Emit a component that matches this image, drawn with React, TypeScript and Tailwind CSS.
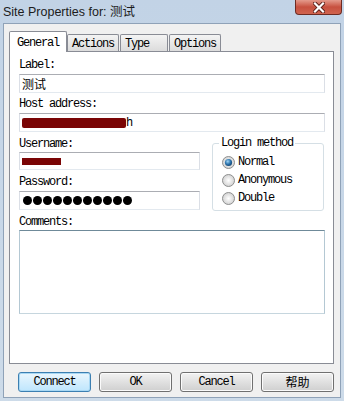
import React from "react";

const mono = "font-mono text-[12px] leading-[12px] tracking-[-1.2px] text-black";
const cjk = "font-['Noto_Sans_CJK_SC'] tracking-normal";

function Radio({ checked }: { checked?: boolean }) {
  return (
    <svg width="13" height="13" viewBox="0 0 13 13">
      <defs>
        <radialGradient id="rg" cx="50%" cy="50%" r="60%">
          <stop offset="0%" stopColor="#ffffff" />
          <stop offset="100%" stopColor="#c9c9c9" />
        </radialGradient>
        <radialGradient id="rb" cx="40%" cy="35%" r="70%">
          <stop offset="0%" stopColor="#9fd4f5" />
          <stop offset="55%" stopColor="#2c74ad" />
          <stop offset="100%" stopColor="#103f6b" />
        </radialGradient>
      </defs>
      <circle cx="6.5" cy="6.5" r="6" fill="url(#rg)" stroke="#8e8f8f" strokeWidth="1" />
      {checked && <circle cx="6.5" cy="6.5" r="3.6" fill="url(#rb)" />}
    </svg>
  );
}

function Tab({ label, active }: { label: string; active?: boolean }) {
  if (active) {
    return (
      <div className="relative z-10 -mb-px h-[21px] w-[58px] bg-white border border-b-0 border-[#898c95] rounded-t-[2px] flex items-start pt-[5px] pl-[7px]">
        <span className={mono}>{label}</span>
      </div>
    );
  }
  return (
    <div className="h-[17px] bg-gradient-to-b from-[#f4f4f4] to-[#dcdcdc] border border-b-0 border-[#898c95] rounded-t-[2px] flex items-start pt-[3px] pl-[4px]">
      <span className={mono}>{label}</span>
    </div>
  );
}

function Button({ label, primary }: { label: React.ReactNode; primary?: boolean }) {
  return (
    <div
      className={
        "w-[73px] h-[20px] rounded-[3px] border flex items-center justify-center " +
        (primary
          ? "border-[#3c7fb1] bg-gradient-to-b from-[#eaf6fd] to-[#bee6fd] shadow-[inset_0_0_0_1px_#a8d8f4]"
          : "border-[#707070] bg-gradient-to-b from-[#f2f2f2] to-[#cfcfcf] shadow-[inset_0_0_0_1px_#fbfbfb]")
      }
    >
      <span className={mono}>{label}</span>
    </div>
  );
}

export default function App() {
  return (
    <div className="w-[344px] h-[401px] bg-gradient-to-b from-[#c2d3e6] to-[#cddbe9] flex flex-col overflow-hidden">
      {/* title bar */}
      <div className="h-[23px] flex items-start justify-between">
        <span className="ml-[3px] mt-[4px] font-['Liberation_Sans'] text-[12.5px] leading-[14px] text-[#1c1c1c]">
          Site Properties for: <span className={cjk}>测试</span>
        </span>
        <div className="mr-[2px] w-[47px] h-[15px] rounded-b-[4px] border border-t-0 border-[#6e2b22] bg-gradient-to-b from-[#e49a8c] via-[#c7503f] to-[#d0644f] flex items-center justify-center">
          <svg width="12" height="11" viewBox="0 0 12 11">
            <path d="M2 1.5 L10 9.5 M10 1.5 L2 9.5" stroke="#5a1f18" strokeWidth="4" strokeLinecap="square" />
            <path d="M2 1.5 L10 9.5 M10 1.5 L2 9.5" stroke="#ffffff" strokeWidth="2.2" strokeLinecap="square" />
          </svg>
        </div>
      </div>

      {/* client area */}
      <div className="mx-[3px] h-[375px] bg-[#f0f0f0] border border-[#8fa2b8] flex flex-col">
        {/* tab strip */}
        <div className="mt-[7px] ml-[5px] h-[20px] flex items-end">
          <Tab label="General" active />
          <div className="w-[52px]"><Tab label="Actions" /></div>
          <div className="w-[48px] ml-px"><Tab label="Type" /></div>
          <div className="w-[52px] ml-px"><Tab label="Options" /></div>
        </div>

        {/* tab panel */}
        <div className="ml-[5px] w-[325px] h-[313px] bg-white border border-[#898c95] flex flex-col pl-[9px] pr-[8px]">
          <span className={mono + " mt-[7px]"}>Label:</span>
          <div className="mt-[3px] h-[19px] border border-[#abadb3] border-l-[#dbdfe6] border-r-[#dbdfe6] border-b-[#e3e9ef] flex items-center pl-[2px]">
            <span className={cjk + " text-[12px] leading-[14px] text-black"}>测试</span>
          </div>

          <span className={mono + " mt-[5px]"}>Host address:</span>
          <div className="mt-[3px] h-[19px] border border-[#abadb3] border-l-[#dbdfe6] border-r-[#dbdfe6] border-b-[#e3e9ef] flex items-center pl-[2px]">
            <div className="w-[104px] h-[10px] bg-[#7a0505] rounded-[2px]" />
            <span className={mono + " text-[#555]"}>h</span>
          </div>

          <div className="flex items-start">
            <div className="w-[181px] flex flex-col">
              <span className={mono + " mt-[6px]"}>Username:</span>
              <div className="mt-[2px] h-[18px] border border-[#abadb3] border-l-[#dbdfe6] border-r-[#dbdfe6] border-b-[#e3e9ef] flex items-center pl-[2px]">
                <div className="w-[39px] h-[7px] bg-[#7a0505]" />
              </div>
              <span className={mono + " mt-[6px]"}>Password:</span>
              <div className="mt-[3px] h-[19px] border border-[#abadb3] border-l-[#dbdfe6] border-r-[#dbdfe6] border-b-[#e3e9ef] flex items-center pl-[3px] gap-px">
                {Array.from({ length: 11 }).map((_, i) => (
                  <div key={i} className="w-[9px] h-[9px] rounded-full bg-black" />
                ))}
              </div>
            </div>

            <fieldset className="ml-[12px] mt-[5px] w-[112px] h-[74px] border border-[#d5dfe5] rounded-[3px] pl-[9px]">
              <legend className={mono + " ml-[-3px] px-[2px]"}>Login method</legend>
              <div className="mt-[4px] flex flex-col">
                <div className="h-[18px] flex items-center gap-[3px]">
                  <Radio checked />
                  <span className={mono}>Normal</span>
                </div>
                <div className="h-[18px] flex items-center gap-[3px]">
                  <Radio />
                  <span className={mono}>Anonymous</span>
                </div>
                <div className="h-[18px] flex items-center gap-[3px]">
                  <Radio />
                  <span className={mono}>Double</span>
                </div>
              </div>
            </fieldset>
          </div>

          <span className={mono + " mt-[5px]"}>Comments:</span>
          <div className="mt-[2px] h-[84px] border border-[#b4c8d3] border-t-[#6f8a99] border-b-[#c6d6de]" />
        </div>

        {/* buttons */}
        <div className="mt-[8px] ml-[14px] flex gap-[8px]">
          <Button label="Connect" primary />
          <Button label="OK" />
          <Button label="Cancel" />
          <Button label={<span className={cjk + " text-[12px] leading-[14px]"}>帮助</span>} />
        </div>
      </div>
    </div>
  );
}
